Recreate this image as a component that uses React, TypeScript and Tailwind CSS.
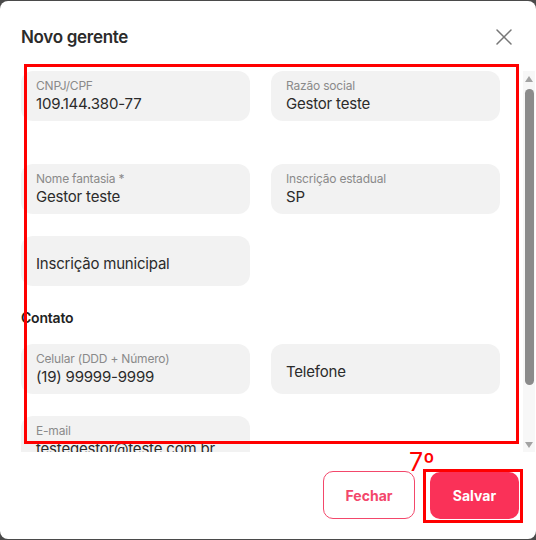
import { X } from 'lucide-react';

type Field = { label?: string; value: string; required?: boolean };

function InputBox({ label, value, required }: Field) {
  return (
    <div className="h-[50px] rounded-xl bg-[#f2f2f2] px-[15px] flex flex-col justify-center">
      {label ? (
        <>
          <span className="text-[12px] leading-4 text-[#8a8a8a] tracking-[-0.2px]">
            {label}
            {required ? ' *' : ''}
          </span>
          <span className="text-[15px] leading-5 text-[#2b2b2b] tracking-[-0.2px] whitespace-nowrap">
            {value}
          </span>
        </>
      ) : (
        <span className="pt-[5px] text-[15px] leading-5 text-[#2b2b2b] tracking-[-0.2px]">{value}</span>
      )}
    </div>
  );
}

// static scrollbar drawing (the page has no native scrollbars)
function ScrollBar() {
  return (
    <div className="w-[12px] h-full bg-[#f7f7f7] flex flex-col items-center">
      <div className="mt-[5px] h-0 w-0 border-x-[4px] border-x-transparent border-b-[6px] border-b-[#a3a3a3]" />
      <div className="mt-[7px] h-[296px] w-[9px] rounded-full bg-[#8b8b8b]" />
      <div className="mt-[57px] h-0 w-0 border-x-[4px] border-x-transparent border-t-[6px] border-t-[#a3a3a3]" />
    </div>
  );
}

export default function App() {
  return (
    <div
      className="w-[536px] h-[540px] bg-[#4a4a4a] py-px"
      style={{ fontFamily: 'Inter, "Noto Sans", sans-serif' }}
    >
      <div className="relative h-full rounded-lg bg-white flex flex-col">
        {/* Header */}
        <div className="flex items-center justify-between pl-[21px] pr-[18px] h-[70px] pt-[4px]">
          <h2 className="text-[17px] font-semibold text-[#2b2b2b] tracking-[-0.3px]">Novo gerente</h2>
          <X className="h-[28px] w-[28px] text-[#777] -mt-[3px]" strokeWidth={1.3} />
        </div>

        {/* Scrollable form */}
        <div className="h-[381px] flex">
          <div className="w-[523px] overflow-hidden pl-[21px] pr-[23px]">
            <div className="grid grid-cols-2 gap-x-[21px]">
              <InputBox label="CNPJ/CPF" value="109.144.380-77" />
              <InputBox label="Razão social" value="Gestor teste" />
            </div>
            <div className="grid grid-cols-2 gap-x-[21px] gap-y-[22px] mt-[43px]">
              <InputBox label="Nome fantasia" required value="Gestor teste" />
              <InputBox label="Inscrição estadual" value="SP" />
              <InputBox value="Inscrição municipal" />
            </div>
            <h3 className="mt-[22px] mb-[16px] text-[14px] leading-5 font-semibold text-[#222] tracking-[-0.2px]">
              Contato
            </h3>
            <div className="grid grid-cols-2 gap-x-[21px] gap-y-[22px] pb-[20px]">
              <InputBox label="Celular (DDD + Número)" value="(19) 99999-9999" />
              <InputBox value="Telefone" />
              <InputBox label="E-mail" value="testegestor@teste.com.br" />
            </div>
          </div>
          <div className="ml-auto mr-px">
            <ScrollBar />
          </div>
        </div>

        {/* Footer */}
        <div className="flex justify-end items-center gap-[15px] pr-[17px] pt-[19px]">
          <button className="h-[48px] w-[92px] rounded-[10px] border border-[#f3476b] text-[14px] font-bold text-[#f3476b]">
            Fechar
          </button>
          <button className="h-[47px] w-[89px] rounded-[10px] bg-[#fa3158] text-[14px] font-bold text-white">
            Salvar
          </button>
        </div>

        {/* Annotation overlays */}
        <div className="pointer-events-none absolute left-[24px] top-[63px] w-[495px] h-[380px] border-[3px] border-[#ff0000]" />
        <div className="pointer-events-none absolute left-[423px] top-[468px] w-[100px] h-[54px] border-[3px] border-[#ff0000]" />
        <span className="pointer-events-none absolute left-[409px] top-[445px] text-[25px] leading-8 text-[#ff0000]">
          7º
        </span>
      </div>
    </div>
  );
}
